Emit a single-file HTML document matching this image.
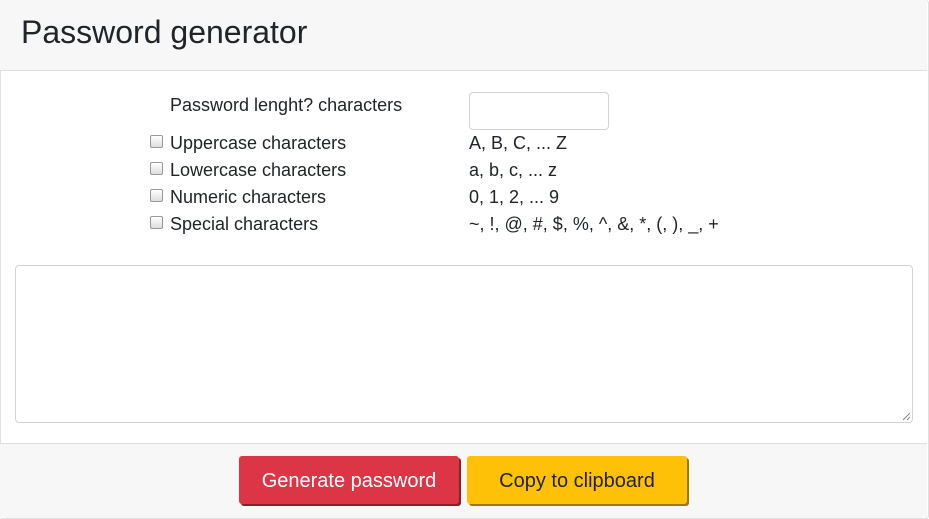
<!DOCTYPE html>
<html><head><style>
body{margin:0;width:929px;height:518px;overflow:hidden;font-family:"Liberation Sans",sans-serif;color:#212529;background:#fff;position:relative}
.card{position:absolute;left:0;top:0;width:927px;height:517px;border:1px solid #dfdfdf;border-radius:3px}
.hdr{position:absolute;left:0;top:0;width:927px;height:70px;background:#f7f7f7;border-bottom:1px solid #dfdfdf}
.hdr h1{margin:0;position:absolute;left:21px;top:14px;font-size:32px;font-weight:normal}
.t{position:absolute;font-size:18px;line-height:20px;white-space:nowrap}
.cb{position:absolute;left:150px;width:11px;height:11px;border:1px solid #999;border-radius:2px;background:linear-gradient(#fff,#ddd)}
.inp{position:absolute;left:469px;top:92px;width:138px;height:36px;border:1px solid #ced4da;border-radius:4px}
.ta{position:absolute;left:15px;top:265px;width:896px;height:156px;border:1px solid #ced4da;border-radius:4px}
.ftr{position:absolute;left:0;top:443px;width:927px;height:74px;background:#f7f7f7;border-top:1px solid #dfdfdf}
.btn{position:absolute;top:456px;height:48px;border-radius:3px;font-size:20px;line-height:51px;text-align:center}
</style></head><body>
<div class="card"></div>
<div class="hdr"><h1>Password generator</h1></div>
<div class="t" style="left:170px;top:95px">Password lenght? characters</div>
<div class="inp"></div>
<div class="cb" style="top:135px"></div><div class="t" style="left:170px;top:133px">Uppercase characters</div><div class="t" style="left:469px;top:133px">A, B, C, ... Z</div>
<div class="cb" style="top:162px"></div><div class="t" style="left:170px;top:160px">Lowercase characters</div><div class="t" style="left:469px;top:160px">a, b, c, ... z</div>
<div class="cb" style="top:189px"></div><div class="t" style="left:170px;top:187px">Numeric characters</div><div class="t" style="left:469px;top:187px">0, 1, 2, ... 9</div>
<div class="cb" style="top:216px"></div><div class="t" style="left:170px;top:214px">Special characters</div><div class="t" style="left:469px;top:214px">~, !, @, #, $, %, ^, &amp;, *, (, ), _, +</div>
<div class="ta"><svg style="position:absolute;right:1px;bottom:1px" width="9" height="9"><path d="M8 1L1 8M8 5L5 8" stroke="#888" stroke-width="1"/></svg></div>
<div class="ftr"></div>
<div class="btn" style="left:239px;width:220px;background:#dc3545;color:#fff;box-shadow:2px 2px 0 #8e1f2a">Generate password</div>
<div class="btn" style="left:467px;width:220px;background:#ffc107;color:#212529;box-shadow:2px 2px 0 #a07a00">Copy to clipboard</div>
</body></html>
